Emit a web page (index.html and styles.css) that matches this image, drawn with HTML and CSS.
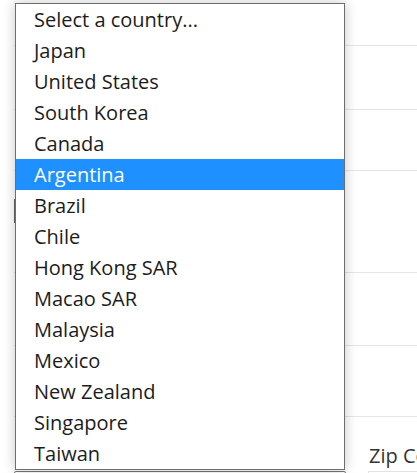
FILE: index.html
```html
<!DOCTYPE html>
<html lang="en">
<head>
<meta charset="utf-8">
<title>Shipping form</title>
<link rel="stylesheet" href="styles.css">
</head>
<body>
<div class="page">
  <form class="form">
    <div class="row row-a"></div>
    <div class="row row-b"></div>
    <div class="row row-c"></div>
    <div class="row row-d"><div class="field-stub"></div></div>
    <div class="row row-e"></div>
    <div class="row row-f"></div>
    <div class="bottom">
      <div class="col">
        <div class="label-spacer" aria-hidden="true"></div>
        <div class="select-box" aria-label="Country"></div>
      </div>
      <div class="col">
        <label class="label">Zip Code</label>
        <div class="input-box"></div>
      </div>
    </div>
  </form>

  <div class="listbox" role="listbox">
    <div class="option">Select a country...</div>
    <div class="option">Japan</div>
    <div class="option">United States</div>
    <div class="option">South Korea</div>
    <div class="option">Canada</div>
    <div class="option selected">Argentina</div>
    <div class="option">Brazil</div>
    <div class="option">Chile</div>
    <div class="option">Hong Kong SAR</div>
    <div class="option">Macao SAR</div>
    <div class="option">Malaysia</div>
    <div class="option">Mexico</div>
    <div class="option">New Zealand</div>
    <div class="option">Singapore</div>
    <div class="option">Taiwan</div>
  </div>
</div>
</body>
</html>
```

FILE: styles.css
```css
html, body {
  margin: 0;
  padding: 0;
  background: #ffffff;
  overflow: hidden;
}

body {
  font-family: "Open Sans", "Noto Sans", sans-serif;
  color: #1f1f1f;
  width: 417px;
  height: 473px;
}

.page {
  position: relative;
  width: 417px;
  height: 473px;
  overflow: hidden;
}

.form {
  margin: 0 0 0 14px;
  width: 403px;
  display: flex;
  flex-direction: column;
}

.row {
  border-bottom: 1px solid #e6e6e6;
  box-sizing: border-box;
}

.row-a { height: 46px; }
.row-b { height: 64px; }
.row-c { height: 61px; }
.row-d { height: 102px; padding-top: 28px; }
.row-e { height: 73px; }
.row-f { height: 71px; }

.field-stub {
  width: 300px;
  height: 24px;
  border-left: 2px solid #666666;
}

.bottom {
  display: grid;
  grid-template-columns: 332px 1fr;
  column-gap: 22px;
  padding-top: 25px;
}

.col {
  display: flex;
  flex-direction: column;
}

.label,
.label-spacer {
  height: 27px;
  margin-bottom: 2px;
}

.label {
  font-size: 20px;
  line-height: 27px;
  padding-left: 1px;
  color: #333333;
  white-space: nowrap;
}

.select-box {
  height: 36px;
  border: 1px solid #767676;
  border-radius: 2px;
}

.input-box {
  height: 36px;
  border: 1px solid #e2e2e2;
}

.listbox {
  position: absolute;
  top: 3px;
  left: 15px;
  width: 328px;
  border: 1px solid #6e6e6e;
  background: #ffffff;
  box-shadow: 0 0 12px rgba(0, 0, 0, 0.22);
}

.option {
  height: 31px;
  line-height: 31px;
  padding-left: 18px;
  font-size: 20px;
  color: #1c1c1c;
  white-space: nowrap;
}

.option.selected {
  background: #1e90ff;
  color: #ffffff;
}
```
